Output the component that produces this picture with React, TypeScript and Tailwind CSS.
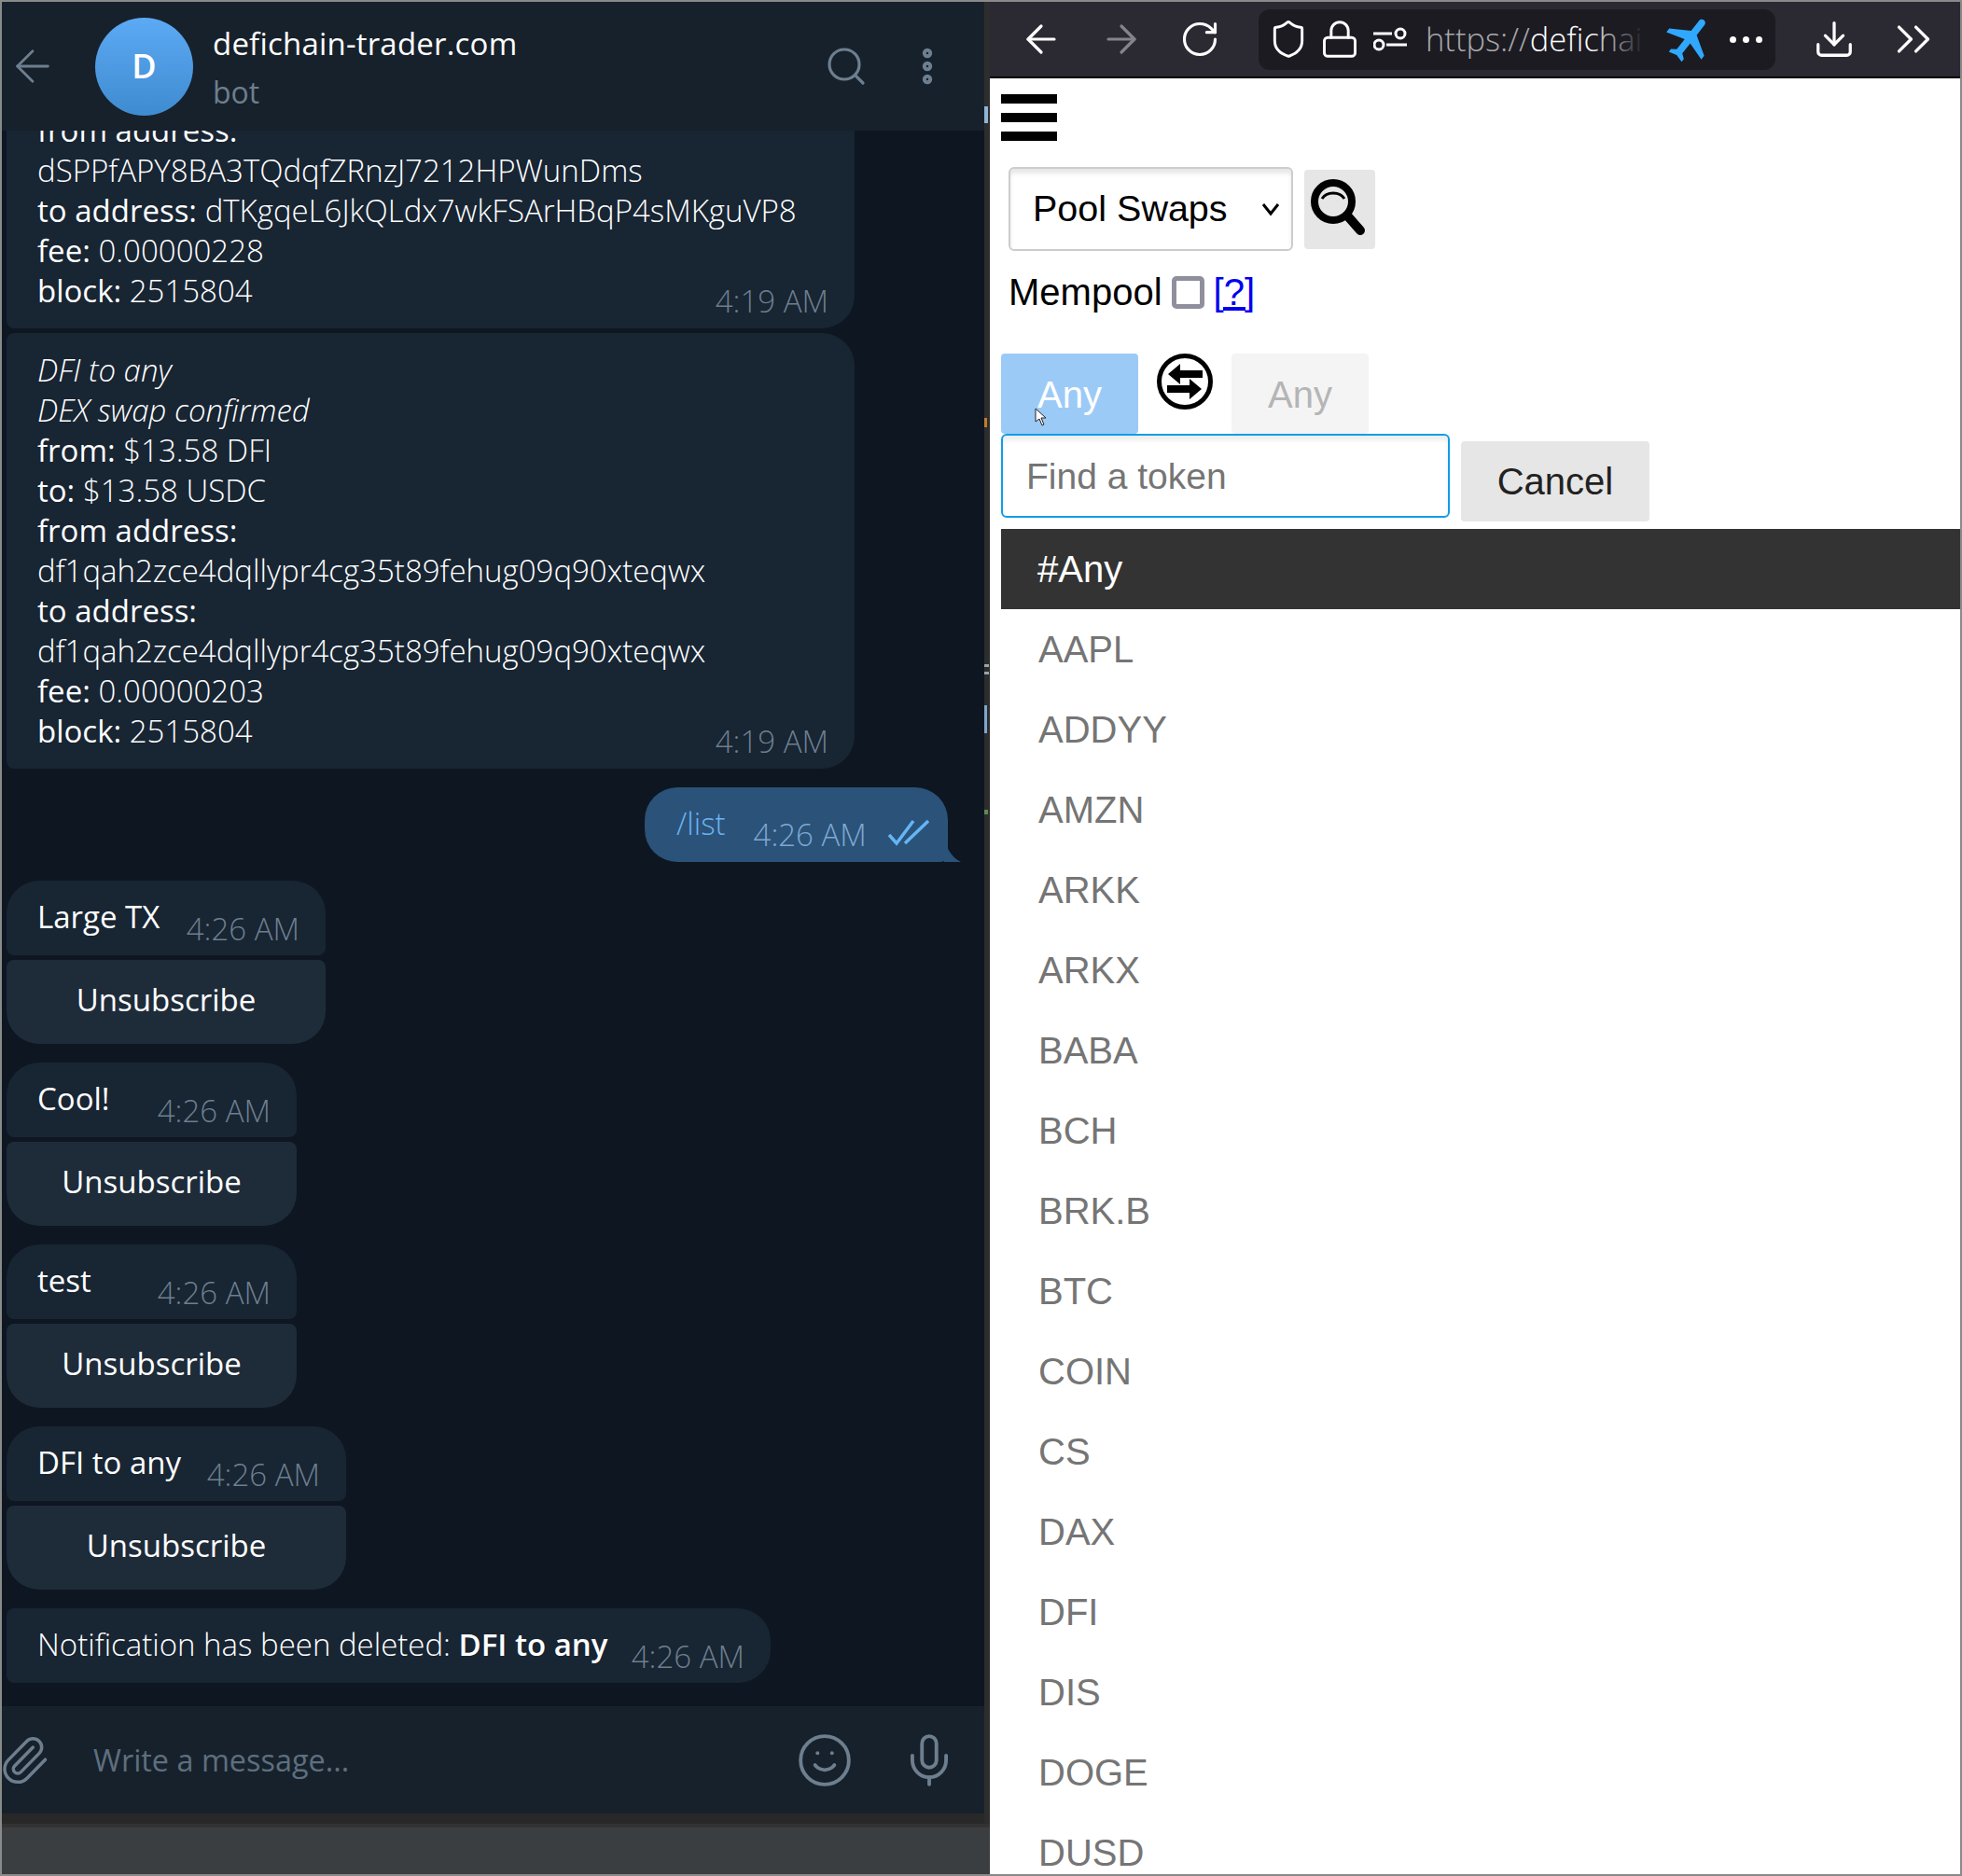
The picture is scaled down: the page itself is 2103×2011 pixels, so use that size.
import { ChevronsRight, Download, Lock, MoreVertical, Paperclip, RotateCw, Search, Shield, Smile, Mic, ArrowLeft, ArrowRight } from "lucide-react"
import { MdFlight } from "react-icons/md"

const tokens = ["AAPL", "ADDYY", "AMZN", "ARKK", "ARKX", "BABA", "BCH", "BRK.B", "BTC", "COIN", "CS", "DAX", "DFI", "DIS", "DOGE", "DUSD"]

const Time = ({ children, className = "" }: { children: string; className?: string }) => (
  <span className={`text-[33px] leading-[34px] font-light text-[#6d7f8f] whitespace-nowrap ${className}`}>{children}</span>
)

const Line = ({ label, value }: { label?: string; value?: string }) => (
  <div className="h-[43px] leading-[43px] whitespace-nowrap">
    {label && <span className="font-medium">{label} </span>}
    {value && <span className="font-light">{value}</span>}
  </div>
)

const ListGroup = ({ title, width }: { title: string; width: string }) => (
  <div className={`flex flex-col gap-[5px] ${width}`}>
    <div className="flex h-[80px] items-center justify-between rounded-t-[35px] rounded-b-[8px] bg-[#182533] pl-[33px] pr-[28px]">
      <span className="font-normal -mt-[3px]">{title}</span>
      <Time className="mt-[23px]">4:26 AM</Time>
    </div>
    <div className="flex h-[90px] items-center justify-center rounded-t-[8px] rounded-b-[35px] bg-[#1e2c3a] pb-[5px] font-medium">
      Unsubscribe
    </div>
  </div>
)

const ChatPanel = () => (
  <div className="flex w-[1053px] flex-col bg-[#0e1621] font-['Open_Sans',sans-serif] text-[33px] text-white">
    <div className="z-10 flex h-[138px] shrink-0 items-center bg-[#17212b] pl-[5px] pr-[37px]">
      <ArrowLeft className="h-[56px] w-[56px] text-[#6d7f8f]" strokeWidth={1.2} />
      <div className="ml-[39px] flex h-[105px] w-[105px] shrink-0 items-center justify-center rounded-full bg-gradient-to-b from-[#5caaf5] to-[#3f8bd0] text-[36px] font-semibold">
        D
      </div>
      <div className="ml-[21px] flex flex-col pt-[3px]">
        <span className="text-[33px] leading-[43px] font-medium tracking-[0.2px]">defichain-trader.com</span>
        <span className="mt-[9px] text-[32px] leading-[43px] text-[#6d7f8f]">bot</span>
      </div>
      <Search className="ml-auto h-[48px] w-[48px] text-[#6d7f8f]" strokeWidth={1.6} />
      <MoreVertical className="ml-[39px] h-[48px] w-[48px] text-[#6d7f8f]" strokeWidth={3.2} />
    </div>

    <div className="flex min-h-0 flex-1 flex-col justify-end overflow-hidden pb-[25px] pl-[5px]">
      <div className="relative w-[909px] shrink-0 rounded-r-[35px] rounded-l-[8px] bg-[#182533] pb-[19px] pl-[33px] pt-[18px]">
        <Line label="from address:" />
        <Line value="dSPPfAPY8BA3TQdqfZRnzJ7212HPWunDms" />
        <Line label="to address:" value="dTKgqeL6JkQLdx7wkFSArHBqP4sMKguVP8" />
        <Line label="fee:" value="0.00000228" />
        <Line label="block:" value="2515804" />
        <Time className="absolute bottom-[12px] right-[28px]">4:19 AM</Time>
      </div>

      <div className="relative mt-[5px] w-[909px] shrink-0 rounded-r-[35px] rounded-l-[8px] bg-[#182533] pb-[19px] pl-[33px] pt-[18px]">
        <div className="h-[43px] leading-[43px] font-light italic">DFI to any</div>
        <div className="h-[43px] leading-[43px] font-light italic">DEX swap confirmed</div>
        <Line label="from:" value="$13.58 DFI" />
        <Line label="to:" value="$13.58 USDC" />
        <Line label="from address:" />
        <Line value="df1qah2zce4dqllypr4cg35t89fehug09q90xteqwx" />
        <Line label="to address:" />
        <Line value="df1qah2zce4dqllypr4cg35t89fehug09q90xteqwx" />
        <Line label="fee:" value="0.00000203" />
        <Line label="block:" value="2515804" />
        <Time className="absolute bottom-[12px] right-[28px]">4:19 AM</Time>
      </div>

      <div className="mt-[20px] flex justify-end pr-[39px]">
        <div className="relative flex h-[80px] w-[325px] items-center rounded-l-[35px] rounded-tr-[35px] rounded-br-[8px] bg-[#2b5278] pl-[34px]">
          <span className="-mt-[3px] font-light text-[#6ab3f3]">/list</span>
          <span className="ml-[30px] mt-[22px] text-[33px] font-light whitespace-nowrap text-[#7da8d3]">4:26 AM</span>
          <svg className="ml-[22px] mt-[16px] shrink-0" width="46" height="30" viewBox="0 0 46 30" fill="none" stroke="#64b5f6" strokeWidth="3.5">
            <path d="M2 18l8 9L28 3M19 27L44 3" />
          </svg>
          <svg className="absolute -right-[16px] bottom-0" width="20" height="34" viewBox="0 0 20 34">
            <path d="M0 0c0 18 8 29 18 34H0z" fill="#2b5278" />
          </svg>
        </div>
      </div>

      <div className="mt-[20px]">
        <ListGroup title="Large TX" width="w-[342px]" />
      </div>
      <div className="mt-[20px]">
        <ListGroup title="Cool!" width="w-[311px]" />
      </div>
      <div className="mt-[20px]">
        <ListGroup title="test" width="w-[311px]" />
      </div>
      <div className="mt-[20px]">
        <ListGroup title="DFI to any" width="w-[364px]" />
      </div>

      <div className="mt-[20px] flex h-[80px] w-[819px] shrink-0 items-center justify-between rounded-r-[35px] rounded-l-[8px] bg-[#182533] pl-[33px] pr-[28px]">
        <span className="-mt-[3px] font-light whitespace-nowrap">
          Notification has been deleted: <span className="font-semibold">DFI to any</span>
        </span>
        <Time className="mt-[23px]">4:26 AM</Time>
      </div>
    </div>

    <div className="flex h-[115px] shrink-0 items-center bg-[#17212b] pr-[28px]">
      <Paperclip className="-ml-[4px] h-[56px] w-[56px] text-[#6d7f8f]" strokeWidth={1.5} />
      <span className="ml-[46px] text-[32.4px] font-normal text-[#5d6f7f]">Write a message...</span>
      <Smile className="ml-auto h-[62px] w-[62px] text-[#6d7f8f]" strokeWidth={1.5} />
      <Mic className="ml-[50px] h-[62px] w-[62px] text-[#6d7f8f]" strokeWidth={1.5} />
    </div>
    <div className="h-[11px] shrink-0 bg-[#282828]" />
  </div>
)

const BackWindowStrip = () => (
  <div className="relative w-[6px] bg-[#2d2d2d]">
    <div className="absolute left-0 top-[112px] h-[18px] w-[4px] bg-[#8fb4d6]" />
    <div className="absolute left-0 top-[446px] h-[10px] w-[3px] bg-[#c67a2c]" />
    <div className="absolute left-0 top-[710px] h-[3px] w-[5px] bg-[#9aa4ae]" />
    <div className="absolute left-0 top-[718px] h-[3px] w-[5px] bg-[#9aa4ae]" />
    <div className="absolute left-0 top-[754px] h-[30px] w-[3px] bg-[#7ea6cc]" />
    <div className="absolute left-0 top-[866px] h-[5px] w-[4px] bg-[#5d8a50]" />
  </div>
)

const BrowserToolbar = () => (
  <div className="flex h-[82px] shrink-0 items-center border-b-[2px] border-black bg-[#2b2a33] text-white">
    <div className="flex w-[288px] items-center">
      <ArrowLeft className="ml-[31px] h-[48px] w-[48px]" strokeWidth={1.6} />
      <ArrowRight className="ml-[38px] h-[48px] w-[48px] text-[#85848b]" strokeWidth={1.6} />
      <RotateCw className="ml-[38px] h-[44px] w-[44px]" strokeWidth={1.7} />
    </div>
    <div className="flex h-[65px] w-[554px] items-center rounded-[12px] bg-[#1c1b22] font-['Open_Sans',sans-serif]">
      <Shield className="ml-[10px] h-[44px] w-[44px]" strokeWidth={1.6} />
      <Lock className="ml-[11px] h-[44px] w-[44px]" strokeWidth={1.6} />
      <svg className="ml-[14px] shrink-0" width="36" height="26" viewBox="0 0 36 26" fill="none" stroke="white" strokeWidth="3">
        <path d="M0 7h20M14 19h22" />
        <circle cx="29" cy="7" r="5" />
        <circle cx="6" cy="19" r="5" />
      </svg>
      <div className="relative ml-[20px] w-[234px] overflow-hidden text-[34.5px] font-light whitespace-nowrap">
        <span className="text-[#a8a8ac]">https://</span>defichai
        <div className="absolute inset-y-0 right-0 w-[60px] bg-gradient-to-r from-transparent to-[#1c1b22]" />
      </div>
      <MdFlight className="ml-[20px] h-[60px] w-[60px] rotate-[38deg] text-[#30a8ff]" />
      <div className="ml-[12px] flex gap-[7px]">
        <div className="h-[7px] w-[7px] rounded-full bg-white" />
        <div className="h-[7px] w-[7px] rounded-full bg-white" />
        <div className="h-[7px] w-[7px] rounded-full bg-white" />
      </div>
    </div>
    <Download className="ml-[40px] h-[46px] w-[46px]" strokeWidth={1.7} />
    <ChevronsRight className="ml-[31px] h-[62px] w-[62px]" strokeWidth={1.3} />
  </div>
)

const SwapForm = () => (
  <div className="flex flex-col pl-[12px] font-['Liberation_Sans',sans-serif] text-[40px]">
    <div className="flex flex-col gap-[10px] pt-[17px]">
      <div className="h-[10px] w-[60px] bg-black" />
      <div className="h-[10px] w-[60px] bg-black" />
      <div className="h-[10px] w-[60px] bg-black" />
    </div>

    <div className="ml-[8px] mt-[28px] flex items-start">
      <div className="relative">
        <select className="h-[90px] w-[305px] appearance-none rounded-[6px] border-[2px] border-[#cccccc] pl-[24px] text-[39.5px] text-black shadow-[inset_0_5px_4px_#e8e8e8]">
          <option>Pool Swaps</option>
        </select>
        <svg className="absolute right-[14px] top-[37px]" width="20" height="16" viewBox="0 0 20 16" fill="none" stroke="black" strokeWidth="3">
          <path d="M2 3l8 10 8-10" />
        </svg>
      </div>
      <div className="ml-[12px] mt-[3px] flex h-[85px] w-[76px] items-center justify-center rounded-[4px] bg-[#e6e6e6]">
        <svg className="-translate-x-[2px] -translate-y-[3px]" width="60" height="62" viewBox="0 0 60 62" fill="none" stroke="black">
          <circle cx="25" cy="25" r="20" strokeWidth="8" />
          <path d="M40 40l14 16" strokeWidth="10" strokeLinecap="round" />
          <path d="M13 22c5-8 19-8 24 0" strokeWidth="3" />
        </svg>
      </div>
    </div>

    <div className="ml-[8px] mt-[21px] flex h-[46px] items-center">
      <span className="leading-[46px] text-black">Mempool</span>
      <div className="ml-[10px] h-[35px] w-[35px] rounded-[5px] border-[5px] border-[#8f8f9d]" />
      <span className="ml-[10px] leading-[46px] text-[#0000ee] underline">[?]</span>
    </div>

    <div className="relative mt-[43px] flex items-start">
      <div className="flex h-[86px] w-[147px] items-center justify-center rounded-[4px] bg-[#9ccaf7] pt-[2px] text-white">Any</div>
      <svg className="ml-[20px]" width="60" height="60" viewBox="0 0 60 60">
        <circle cx="30" cy="30" r="27.5" fill="white" stroke="black" strokeWidth="5" />
        <path d="M12 22L25 11v7h24v8H25v7zM48 38L35 49v-7H11v-8h24v-7z" fill="black" />
      </svg>
      <div className="ml-[20px] flex h-[86px] w-[147px] items-center justify-center rounded-[4px] bg-[#f4f4f4] pt-[2px] text-[#b5b5b5]">Any</div>
      <svg className="absolute left-[36px] top-[58px]" width="13" height="20" viewBox="0 0 13 20">
        <path d="M1 1v14l4-3 3 7 2-1-3-7h5z" fill="white" stroke="#222" />
      </svg>
    </div>

    <div className="flex items-start">
      <div className="flex h-[90px] w-[481px] items-center rounded-[6px] border-[2px] border-[#0f9de8] pl-[25px] pt-[2px] text-[39px] text-[#757575] shadow-[inset_0_5px_4px_#eeeeee]">
        Find a token
      </div>
      <div className="ml-[12px] mt-[8px] flex h-[86px] w-[202px] items-center justify-center rounded-[4px] bg-[#e6e6e6] text-[#222222]">
        Cancel
      </div>
    </div>

    <div className="mt-[8px] flex h-[86px] shrink-0 items-center bg-[#333333] pl-[39px] text-white">#Any</div>
    {tokens.map((token) => (
      <div key={token} className="flex h-[86px] shrink-0 items-center pl-[40px] text-[#757575]">
        {token}
      </div>
    ))}
  </div>
)

const App = () => (
  <div className="flex h-[2011px] w-[2103px] overflow-hidden border-[2px] border-[#8a8a8a] bg-white">
    <div className="flex h-full w-[1059px] shrink-0 flex-col">
      <div className="flex min-h-0 flex-1">
        <ChatPanel />
        <BackWindowStrip />
      </div>
      <div className="h-[54px] shrink-0 border-t-[4px] border-[#333333] bg-[#3b3e41]" />
    </div>
    <div className="flex h-full min-w-0 flex-1 flex-col overflow-hidden">
      <BrowserToolbar />
      <SwapForm />
    </div>
  </div>
)

export default App
